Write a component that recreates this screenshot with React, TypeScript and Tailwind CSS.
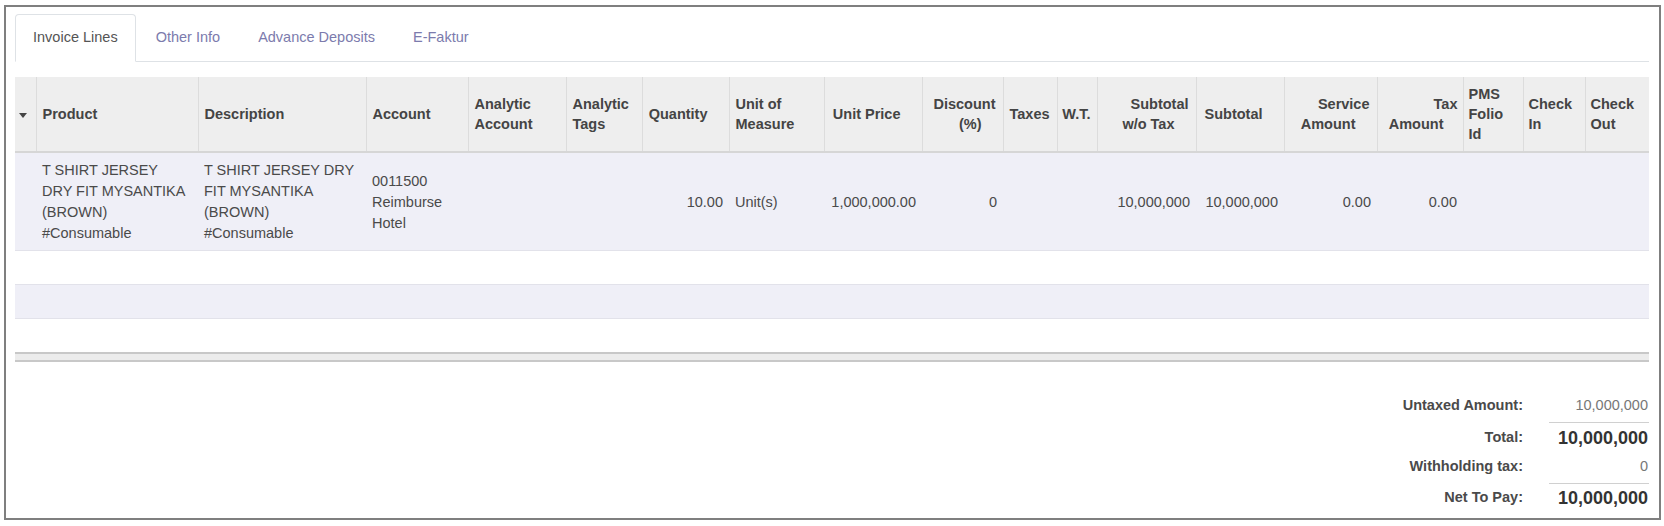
import { Fragment } from "react";

type Col = {
  w: string;
  label: string[];
  right?: boolean;
  spacer?: boolean;
  pad?: string;
};

const cols: Col[] = [
  { w: "w-[21px]", label: [] },
  { w: "w-[162px]", label: ["Product"] },
  { w: "w-[168px]", label: ["Description"] },
  { w: "w-[102px]", label: ["Account"] },
  { w: "w-[98px]", label: ["Analytic", "Account"] },
  { w: "w-[76px]", label: ["Analytic", "Tags"] },
  { w: "w-[87px]", label: ["Quantity"], right: true, spacer: true },
  { w: "w-[95px]", label: ["Unit of", "Measure"] },
  { w: "w-[98px]", label: ["Unit Price"], right: true, spacer: true },
  { w: "w-[81px]", label: ["Discount", "(%)"], right: true, spacer: true },
  { w: "w-[54px]", label: ["Taxes"] },
  { w: "w-[40px]", label: ["W.T."], right: true, pad: "pl-0 pr-[6px]" },
  { w: "w-[99px]", label: ["Subtotal", "w/o Tax"], right: true, spacer: true },
  { w: "w-[88px]", label: ["Subtotal"], right: true, spacer: true },
  { w: "w-[93px]", label: ["Service", "Amount"], right: true, spacer: true },
  { w: "w-[86px]", label: ["Tax", "Amount"], right: true, spacer: true, pad: "pl-[4px] pr-[5px]" },
  { w: "w-[60px]", label: ["PMS", "Folio", "Id"], pad: "pl-[5px] pr-0" },
  { w: "w-[62px]", label: ["Check", "In"], pad: "pl-[5px] pr-0" },
  { w: "w-[64px]", label: ["Check", "Out"], pad: "pl-[5px] pr-0" }
];

const row: { lines: string[]; right?: boolean }[] = [
  { lines: [] },
  { lines: ["T SHIRT JERSEY", "DRY FIT MYSANTIKA", "(BROWN)", "#Consumable"] },
  { lines: ["T SHIRT JERSEY DRY", "FIT MYSANTIKA", "(BROWN)", "#Consumable"] },
  { lines: ["0011500", "Reimburse", "Hotel"] },
  { lines: [] },
  { lines: [] },
  { lines: ["10.00"], right: true },
  { lines: ["Unit(s)"] },
  { lines: ["1,000,000.00"], right: true },
  { lines: ["0"], right: true },
  { lines: [] },
  { lines: [] },
  { lines: ["10,000,000"], right: true },
  { lines: ["10,000,000"], right: true },
  { lines: ["0.00"], right: true },
  { lines: ["0.00"], right: true },
  { lines: [] },
  { lines: [] },
  { lines: [] }
];

const tabs = ["Invoice Lines", "Other Info", "Advance Deposits", "E-Faktur"];

function Lines({ lines }: { lines: string[] }) {
  return (
    <>
      {lines.map((l, i) => (
        <Fragment key={i}>
          {i > 0 && <br />}
          <span className="whitespace-nowrap">{l}</span>
        </Fragment>
      ))}
    </>
  );
}

export default function App() {
  return (
    <div
      className="h-[526px] w-[1664px] overflow-hidden bg-white pl-[4px] pt-[5px] text-[14.5px] text-[#4a4a4a]"
      style={{ fontFamily: '"Liberation Sans", Arial, sans-serif' }}
    >
      <div className="h-[515px] w-[1657px] border-2 border-[#7f7f7f] pl-[9px] pr-[10px] pt-[7px]">
        <div className="flex gap-[2px] border-b border-[#dee2e6]">
          {tabs.map((t, i) => (
            <div
              key={t}
              className={
                i === 0
                  ? "-mb-px rounded-t-[4px] border border-[#dee2e6] border-b-white bg-white px-[17px] py-[12px] leading-[21px] text-[#555]"
                  : "border border-transparent px-[17px] py-[12px] leading-[21px] text-[#7c7bad]"
              }
            >
              {t}
            </div>
          ))}
        </div>

        <table className="mt-[15px] w-[1634px] table-fixed border-collapse">
          <colgroup>
            {cols.map((c, i) => (
              <col key={i} className={c.w} />
            ))}
          </colgroup>
          <thead>
            <tr className="border-b-2 border-[#d6d6d6] bg-[#eeeeee]">
              {cols.map((c, i) => (
                <th
                  key={i}
                  className={
                    (i < cols.length - 1 ? "border-r border-[#dcdcdc] " : "") +
                    (c.right ? "text-right " : "text-left ") +
                    (c.pad ?? "pl-[6px] pr-[7px]") +
                    " h-[74px] py-[7px] align-middle text-[14.5px] font-bold leading-[20px] text-[#444]"
                  }
                >
                  {i === 0 ? (
                    <span className="ml-[-2px] inline-block border-x-[4px] border-t-[5px] border-x-transparent border-t-[#444] align-middle" />
                  ) : (
                    <>
                      <Lines lines={c.label} />
                      {c.spacer && <span className="inline-block w-[14px]" />}
                    </>
                  )}
                </th>
              ))}
            </tr>
          </thead>
          <tbody>
            <tr className="border-b border-[#e2e2ea] bg-[#efeff7]">
              {row.map((c, i) => (
                <td
                  key={i}
                  className={
                    (c.right ? "text-right " : "text-left ") +
                    "px-[6px] pb-[6px] pt-[7px] align-middle leading-[21px]"
                  }
                >
                  <Lines lines={c.lines} />
                </td>
              ))}
            </tr>
            <tr className="h-[34px] border-b border-[#e2e2ea] bg-white">
              <td colSpan={19} />
            </tr>
            <tr className="h-[34px] border-b border-[#e2e2ea] bg-[#efeff7]">
              <td colSpan={19} />
            </tr>
            <tr className="h-[33px] bg-white">
              <td colSpan={19} />
            </tr>
          </tbody>
        </table>
        <div className="h-[10px] w-[1634px] border-y-2 border-[#c8c8c8] bg-[#ececec]" />

        <div className="mt-[33px] flex w-[1634px] justify-end">
          <table className="border-collapse">
            <tbody>
              <tr>
                <td className="pb-[6px] pr-[26px] text-right align-middle font-bold leading-[21px]">
                  Untaxed Amount:
                </td>
                <td className="w-[100px] pb-[6px] pr-[1px] text-right align-middle leading-[21px] text-[#777]">
                  10,000,000
                </td>
              </tr>
              <tr>
                <td className="pb-[6px] pr-[26px] pt-[4px] text-right align-middle font-bold leading-[21px]">
                  Total:
                </td>
                <td className="w-[100px] border-t border-[#d0d0d0] pb-[6px] pr-[1px] pt-[3px] text-right align-middle text-[18px] font-bold leading-[24px] text-[#333]">
                  10,000,000
                </td>
              </tr>
              <tr>
                <td className="pb-[6px] pr-[26px] text-right align-middle font-bold leading-[21px]">
                  Withholding tax:
                </td>
                <td className="w-[100px] pb-[6px] pr-[1px] text-right align-middle leading-[21px] text-[#777]">
                  0
                </td>
              </tr>
              <tr>
                <td className="pr-[26px] pt-[3px] text-right align-middle font-bold leading-[21px]">
                  Net To Pay:
                </td>
                <td className="w-[100px] border-t border-[#d0d0d0] pr-[1px] pt-[2px] text-right align-middle text-[18px] font-bold leading-[24px] text-[#333]">
                  10,000,000
                </td>
              </tr>
            </tbody>
          </table>
        </div>
      </div>
    </div>
  );
}
